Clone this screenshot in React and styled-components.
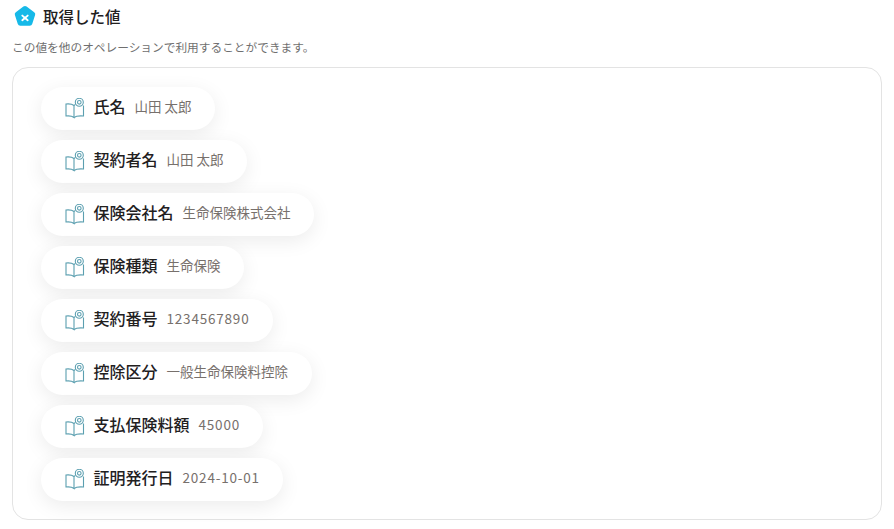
import React from 'react'
import styled, { createGlobalStyle } from 'styled-components'

const GlobalStyle = createGlobalStyle`
  html, body {
    margin: 0;
    padding: 0;
    background: #fff;
  }
  body {
    font-family: "Noto Sans CJK JP", "Noto Sans", sans-serif;
  }
`

const Page = styled.div`
  width: 894px;
  height: 529px;
  box-sizing: border-box;
  padding: 5px 12px 0 12px;
  overflow: hidden;
`

const Header = styled.div`
  display: flex;
  align-items: center;
  gap: 6px;
  padding-left: 1px;
  height: 24px;
`

const Title = styled.div`
  font-size: 15.500px;
  font-weight: 500;
  line-height: 22px;
  padding-bottom: 2px;
  color: #22201e;
`

const Description = styled.div`
  margin-top: 8px;
  font-size: 11.700px;
  line-height: 20px;
  color: #6f6f6f;
`

const Card = styled.div`
  margin-top: 10px;
  width: 870px;
  height: 453px;
  box-sizing: border-box;
  border: 1px solid #e3e3e3;
  border-radius: 16px;
  padding: 19px 28px 18px;
  display: flex;
  flex-direction: column;
  align-items: flex-start;
  gap: 10px;
`

const Chip = styled.div`
  display: flex;
  align-items: center;
  height: 43px;
  flex: none;
  box-sizing: border-box;
  padding: 0 23.500px 0 23px;
  border-radius: 22px;
  background: #fff;
  box-shadow: 0 5px 20px rgba(0, 0, 0, 0.08);
`

const ChipIcon = styled.svg`
  width: 22px;
  height: 22px;
  margin-right: 7.500px;
  flex: none;
`

const Label = styled.span`
  font-size: 16px;
  line-height: 22px;
  font-weight: 500;
  color: #22201e;
  margin-right: 9px;
  padding-bottom: 5px;
`

const Value = styled.span`
  font-size: 13.500px;
  line-height: 20px;
  color: #77706c;
  padding-bottom: 5px;
  letter-spacing: ${p => (p.$latin ? '0.8px' : '0')};
`

const LogoIcon = () => (
  <svg width="24" height="24" viewBox="0 0 24 24">
    <path
      d="M10.400 1.600a2.600 2.600 0 0 1 3.200 0l7.600 5.600a2.600 2.600 0 0 1 .9 2.900l-2.900 8.900a2.600 2.600 0 0 1-2.500 1.800H7.300a2.600 2.600 0 0 1-2.500-1.800L1.900 10.100a2.600 2.600 0 0 1 .9-2.900z"
      fill="#16b9e8"
    />
    <path d="M9.300 10.600l5.400 4.600M14.700 10.600l-5.400 4.600" stroke="#fff" strokeWidth="1.900" strokeLinecap="round" />
  </svg>
)

const BookIcon = () => (
  <ChipIcon viewBox="0 1 22 22" fill="none" stroke="#5b9fb0" strokeWidth="1.100">
    <path d="M10 20.500V8.500C8.500 7.300 5 6.700 2 7V19C5 18.700 8.500 19.300 10 20.500Z" />
    <path d="M10 20.500C11.500 19.300 15.500 18.700 19.500 19V8.500" />
    <path d="M10 8.500C10.500 8 11 7.700 11.500 7.500" />
    <circle cx="15.300" cy="5.300" r="4" />
    <circle cx="15.300" cy="5.300" r="1.800" />
  </ChipIcon>
)

const items = [
  { label: '氏名', value: '山田 太郎' },
  { label: '契約者名', value: '山田 太郎' },
  { label: '保険会社名', value: '生命保険株式会社' },
  { label: '保険種類', value: '生命保険' },
  { label: '契約番号', value: '1234567890', latin: true },
  { label: '控除区分', value: '一般生命保険料控除' },
  { label: '支払保険料額', value: '45000', latin: true },
  { label: '証明発行日', value: '2024-10-01', latin: true },
]

const App = () => {
  return (
    <Page>
      <GlobalStyle />
      <Header>
        <LogoIcon />
        <Title>取得した値</Title>
      </Header>
      <Description>この値を他のオペレーションで利用することができます。</Description>
      <Card>
        {items.map(item => (
          <Chip key={item.label}>
            <BookIcon />
            <Label>{item.label}</Label>
            <Value $latin={item.latin}>{item.value}</Value>
          </Chip>
        ))}
      </Card>
    </Page>
  )
}

export default App
